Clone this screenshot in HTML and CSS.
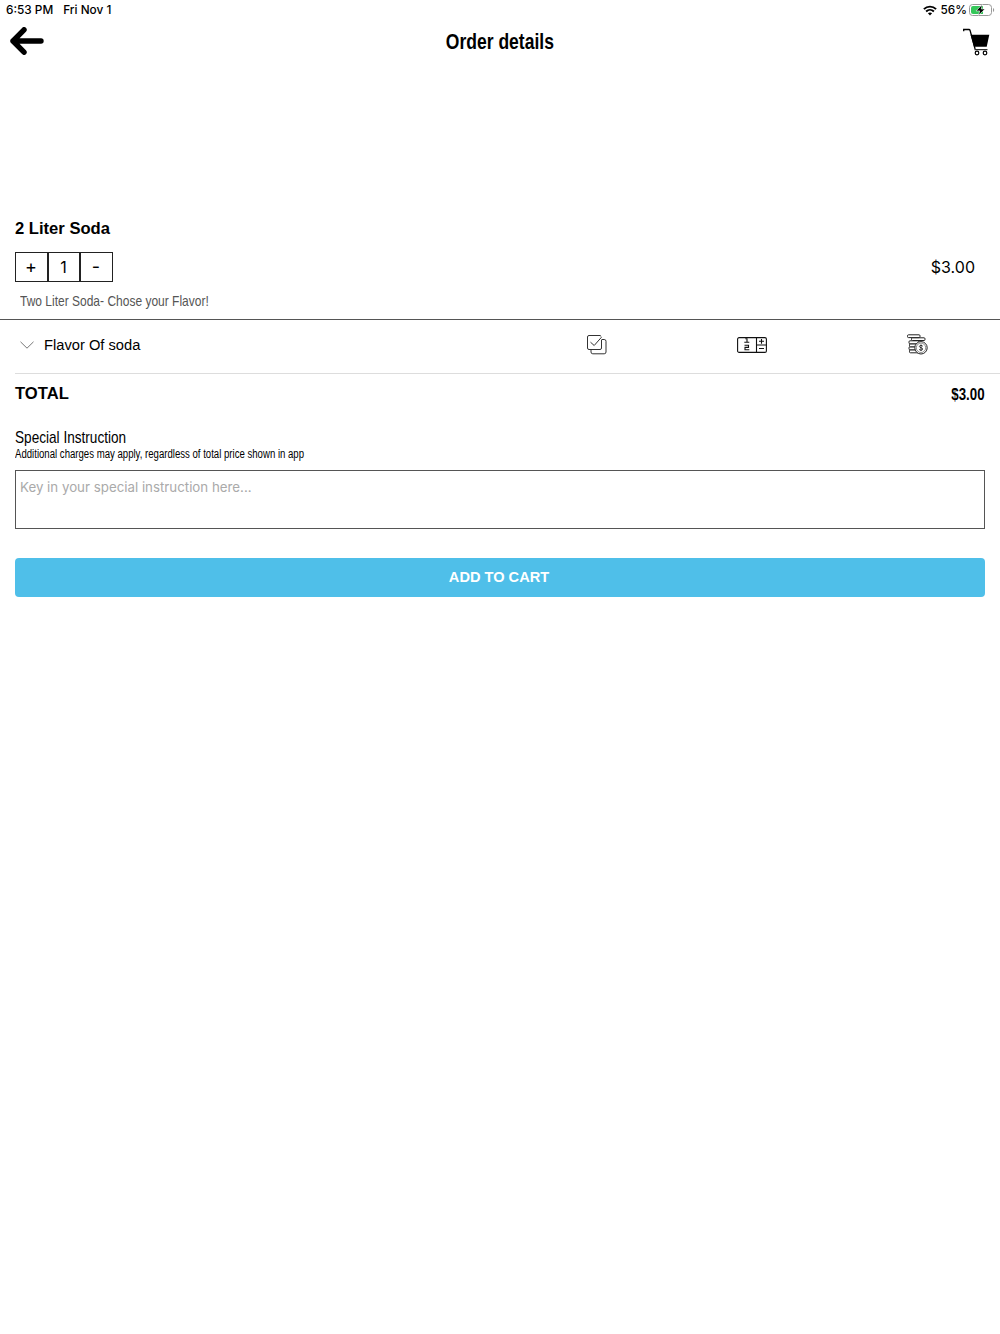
FILE: index.html
```html
<!DOCTYPE html>
<html lang="en">
<head>
    <meta charset="UTF-8">
    <meta name="viewport" content="width=device-width, initial-scale=1.0">
    <title>Order details</title>
    <link rel="stylesheet" href="styles.css">
</head>
<body>
    <!-- Status bar -->
    <div class="status-bar">
        <span class="time">6:53 PM</span>
        <span class="date">Fri Nov 1</span>
        <svg class="wifi" width="14" height="11" viewBox="0 0 14 11" fill="none" stroke="#000" stroke-width="1.9">
            <path d="M.9 4.2C4.3.7 9.7.7 13.1 4.2M3.1 6.5c2.2-2.2 5.6-2.2 7.8 0"/>
            <path d="M7 10.5 4.9 8.3c1.200-1 3-1 4.200 0z" fill="#000" stroke="none"/>
        </svg>
        <span class="percent">56%</span>
        <svg class="battery" width="26" height="12" viewBox="0 0 26 12">
            <rect x=".5" y=".5" width="22" height="11" rx="3" fill="#fff" stroke="#999"/>
            <path d="M4 2h10v8H4a2 2 0 0 1-2-2V4a2 2 0 0 1 2-2z" fill="#34c759"/>
            <path d="M13.300.5 7 6.900h3.700L9.500 11.300l6.500-6.300h-3.700z" fill="#000" stroke="#fff" stroke-width=".6"/>
            <path d="M24 4v4c1.600-.7 1.600-3.300 0-4z" fill="#999"/>
        </svg>
    </div>

    <!-- Header -->
    <div class="header">
        <svg class="back" width="34" height="28" viewBox="0 0 34 28" fill="none" stroke="#000" stroke-width="5.4" stroke-linecap="round" stroke-linejoin="round">
            <path d="M31 14H3M14 2.800 3 14l11 11.200"/>
        </svg>
        <h1><span class="narrow title">Order details</span></h1>
        <svg class="cart" width="27" height="28" viewBox="0 0 27 28">
            <path d="M.7 3.300V1.500h5.200c.7 0 1 .3 1.200 1l5 18.500" fill="none" stroke="#000" stroke-width="1.300"/>
            <path d="M7.600 6.800H26.300L23.700 18.700H11z"/>
            <path d="M11.500 21.700h13" fill="none" stroke="#000" stroke-width="1"/>
            <g fill="#fff" stroke="#000" stroke-width="1.200">
                <circle cx="14" cy="25" r="1.800"/>
                <circle cx="22" cy="25" r="1.800"/>
            </g>
        </svg>
    </div>

    <!-- Item -->
    <div class="item">
        <h2>2 Liter Soda</h2>
        <div class="quantity-row">
            <div class="quantity">
                <button>+</button>
                <span>1</span>
                <button>-</button>
            </div>
            <div class="price">$3.00</div>
        </div>
        <p><span class="narrow description">Two Liter Soda- Chose your Flavor!</span></p>
    </div>

    <!-- Options -->
    <div class="option-row">
        <svg class="chevron" width="14" height="8" viewBox="0 0 14 8" fill="none" stroke="#777" stroke-width="1">
            <path d="M.5.8 7 7.200 13.500.8"/>
        </svg>
        <span class="option-name">Flavor Of soda</span>
        <svg class="check-icon" width="20" height="20" viewBox="0 0 20 20" fill="none" stroke="#333" stroke-width="1">
            <path d="M14.500 5v8a1.500 1.500 0 0 1-1.500 1.500H2A1.500 1.500 0 0 1 .5 13V2A1.500 1.500 0 0 1 2 .5h11l1.200.8"/>
            <path d="M3.500 7.200l3.700 3.300 7.300-8.300M4 14.500V17a1.800 1.800 0 0 0 1.800 1.800h11.400A1.800 1.800 0 0 0 19 17V6.300a1.800 1.800 0 0 0-1.800-1.800h-2.700"/>
        </svg>
        <svg class="half-icon" width="30" height="16" viewBox="0 0 30 16" fill="none" stroke="#111" stroke-width="1.100">
            <rect x=".6" y=".6" width="28.800" height="14.800" rx="1.500"/>
            <path d="M19.500.6v14.800M19.500 8h10M22 4.300h5M24.500 1.900v4.800M22 11.500h5"/>
            <path d="M8.300 1.700h1.700v3M7.300 5.200h5M7.500 8.200h4v2.200h-3.500v2.400h4.300"/>
        </svg>
        <svg class="coins-icon" width="21" height="21" viewBox="0 0 21 21" fill="#fff" stroke="#222" stroke-width="1">
            <rect x="2.500" y="15.800" width="10" height="3" rx="1"/>
            <rect x="2" y="12.800" width="10" height="3" rx="1"/>
            <rect x="2.500" y="9.800" width="10" height="3" rx="1"/>
            <rect x="2" y="6.800" width="10" height="3" rx="1"/>
            <rect x="4.500" y="3.800" width="13.500" height="2.700" rx="1"/>
            <rect x=".5" y=".8" width="12.500" height="2.800" rx="1"/>
            <circle cx="14" cy="13.800" r="6.200"/>
            <circle cx="14" cy="13.800" r="4.700" stroke-width=".5"/>
            <path d="M15.800 12.300c-.6-1.300-3.400-1.200-3.400.2s3.300 1 3.300 2.500-3 1.600-3.600.2M14 10.500v6.500" fill="none" stroke-width=".9"/>
        </svg>
    </div>

    <!-- Total -->
    <div class="total-row">
        <span class="total-label">TOTAL</span>
        <span class="narrow total-price">$3.00</span>
    </div>

    <!-- Special instruction -->
    <div class="instruction">
        <div class="instruction-title"><span class="narrow instruction-name">Special Instruction</span></div>
        <div class="instruction-note"><span class="narrow note-text">Additional charges may apply, regardless of total price shown in app</span></div>
        <textarea placeholder="Key in your special instruction here..."></textarea>
        <button class="add-button">ADD TO CART</button>
    </div>
</body>
</html>
```

FILE: styles.css
```css
* {
    box-sizing: border-box;
}

body {
    font-family: "Liberation Sans", Arial, sans-serif;
    background-color: #fff;
    color: #000;
    margin: 0;
}

svg {
    display: block;
    flex: none;
}

h1, h2, p {
    margin: 0;
}

/* condensed text */
.narrow {
    display: inline-block;
    white-space: nowrap;
    transform: scaleX(0.8);
    transform-origin: left center;
}

.status-bar {
    display: flex;
    align-items: center;
    height: 20px;
    padding: 0 5px 0 6px;
    font-family: Inter, sans-serif;
    font-size: 11.8px;
    line-height: 14px;
    font-weight: 500;
}

.time, .date, .percent {
    padding-bottom: 1px;
}

.date {
    margin-left: 10px;
}

.wifi {
    margin-left: auto;
}

.percent {
    margin: 0 2px 0 4px;
}

.header {
    display: grid;
    grid-template-columns: 1fr auto 1fr;
    align-items: center;
    height: 44px;
    padding: 0 10px;
}

.back {
    margin-bottom: 2px;
}

.cart {
    justify-self: end;
}

h1 {
    font-size: 22px;
    line-height: 26px;
}

.title {
    transform: scaleX(0.796);
    transform-origin: center;
}

.item {
    height: 256px;
    padding: 155px 15px 0;
    border-bottom: 1px solid #555;
}

h2 {
    font-size: 16.6px;
    line-height: 20px;
}

.quantity-row {
    display: flex;
    justify-content: space-between;
    align-items: center;
    height: 30px;
    margin-top: 13px;
    padding-right: 10px;
}

.quantity {
    display: flex;
}

.quantity button, .quantity span {
    width: 33px;
    height: 30px;
    padding: 0 1px 0 0;
    border: 1px solid #222;
    background: #fff;
    color: #000;
    font-family: Inter, sans-serif;
    font-size: 16px;
    line-height: 28px;
    text-align: center;
}

.quantity button {
    font-size: 18px;
}

.quantity span {
    width: 32px;
}

.price {
    font-family: Inter, sans-serif;
    font-size: 16px;
}

.item p {
    margin: 9px 0 0 5px;
    font-size: 15px;
    line-height: 20px;
    color: #555;
}

.option-row {
    display: flex;
    align-items: center;
    height: 54px;
    margin-left: 15px;
    padding: 0 72px 4px 5px;
    border-bottom: 1px solid #ddd;
}

.option-name {
    margin-left: 10px;
    font-size: 14.7px;
}

.check-icon {
    margin-left: auto;
}

.half-icon {
    margin-left: 130px;
}

.coins-icon {
    margin-left: 140px;
}

.total-row {
    display: flex;
    justify-content: space-between;
    align-items: center;
    height: 40px;
    padding: 0 15px;
    font-size: 16.6px;
    font-weight: bold;
}

.total-price {
    padding-top: 1px;
    transform-origin: right center;
}

.instruction {
    padding: 14px 15px 0;
}

.instruction-title {
    height: 19px;
    font-size: 17px;
    line-height: 19px;
}

.instruction-note {
    height: 14px;
    font-size: 12px;
    line-height: 14px;
}

textarea {
    display: block;
    width: 100%;
    height: 59px;
    margin-top: 9px;
    padding: 7px 4px;
    border: 1px solid #555;
    resize: none;
    font-family: Inter, sans-serif;
    font-size: 13.3px;
    line-height: 18px;
}

textarea::placeholder {
    color: #aaa;
}

.add-button {
    display: block;
    width: 100%;
    height: 39px;
    margin-top: 29px;
    padding: 0 2px 1px 0;
    border: none;
    border-radius: 4px;
    background-color: #4fbfe9;
    color: #fff;
    font-family: "Liberation Sans", Arial, sans-serif;
    font-size: 14.6px;
    font-weight: bold;
}
```
